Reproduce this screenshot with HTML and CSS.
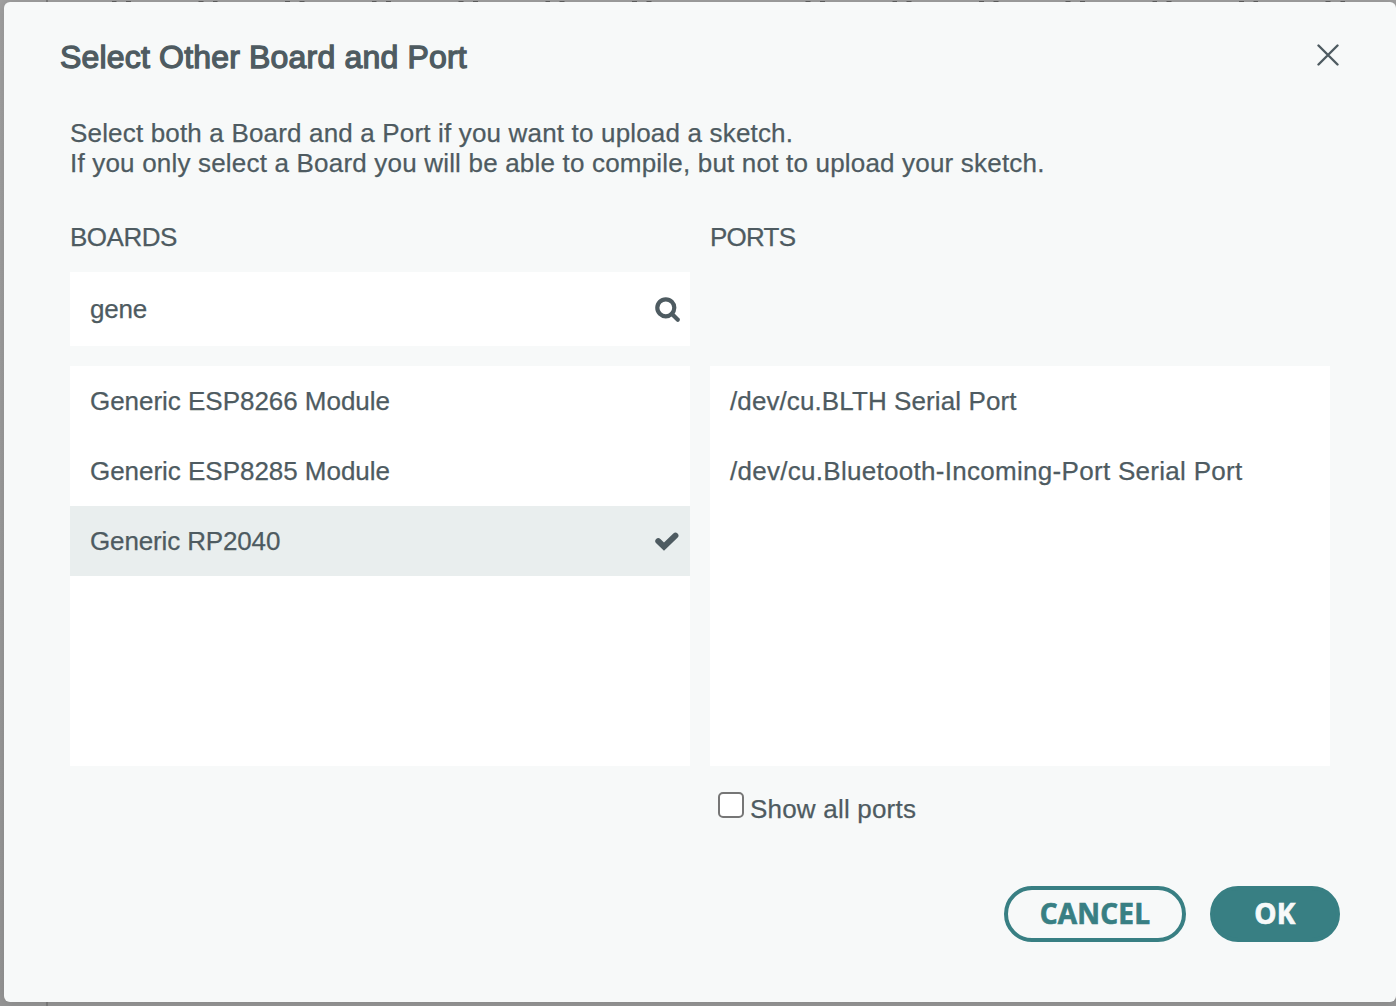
FILE: index.html
```html
<!DOCTYPE html>
<html lang="en">
<head>
<meta charset="utf-8">
<title>Select Other Board and Port</title>
<link rel="stylesheet" href="styles.css">
</head>
<body>
<svg class="backdrop" width="1396" height="1006" aria-hidden="true">
  <path class="gutter" d="M47 0v1006"/>
  <path class="ticks" d="M112 1.5h4.5M126 1.5h5M198.5 1.5h5M213 1.5h4.5M285 1.5h5M299.5 1.5h5M372 1.5h4.5M386 1.5h5M458.500 1.5h5M473 1.5h5M545.500 1.5h4.500M559.500 1.5h5M632 1.5h5M646.500 1.5h5M805.500 1.5h5M820 1.5h5M892.500 1.5h4.500M906.500 1.5h5M979 1.5h5M993.500 1.5h5M1065.500 1.5h5M1080 1.5h5M1152.500 1.5h4.500M1166.500 1.5h5M1239 1.5h5M1253.500 1.5h4.500M1325.500 1.5h5M1340.500 1.5h4.500"/>
</svg>
<main class="dialog">
  <header class="dialog-header">
    <h1>Select Other Board and Port</h1>
    <button class="close" aria-label="Close"><svg width="22" height="22" viewBox="0 0 22 22"><path d="M1.500 1.500 20.500 20.500M20.500 1.500 1.500 20.500"/></svg></button>
  </header>
  <p class="intro"><span class="t-first">Select both a Board and a Port if you want to upload a sketch.</span><br>If you only select a Board you will be able to compile, but not to upload your sketch.</p>
  <div class="columns">
    <section>
      <h2 class="t-boards">BOARDS</h2>
      <div class="search">
        <span class="t-gene">gene</span>
        <svg class="search-icon" width="26" height="26" viewBox="0 0 26 26"><circle cx="10.800" cy="10.800" r="8.500"/><path d="M17 17l5.800 5.800"/></svg>
      </div>
      <ul class="list">
        <li><span class="t-module">Generic ESP8266 Module</span></li>
        <li><span class="t-module">Generic ESP8285 Module</span></li>
        <li class="selected"><span class="t-rp">Generic RP2040</span><svg class="check" width="24" height="20" viewBox="0 0 24 20"><path d="M3.300 10.200 9 15.700 20.400 4.700"/></svg></li>
      </ul>
    </section>
    <section>
      <h2 class="t-ports">PORTS</h2>
      <div class="search-space"></div>
      <ul class="list">
        <li><span class="t-blth">/dev/cu.BLTH Serial Port</span></li>
        <li><span class="t-bluetooth">/dev/cu.Bluetooth-Incoming-Port Serial Port</span></li>
      </ul>
      <label class="show-all"><span class="box"></span><span class="t-show">Show all ports</span></label>
    </section>
  </div>
  <footer class="actions">
    <button class="btn cancel">CANCEL</button>
    <button class="btn ok">OK</button>
  </footer>
</main>
</body>
</html>
```
FILE: styles.css
```css
* { box-sizing: border-box; }
body {
  margin: 0;
  width: 1396px;
  height: 1006px;
  overflow: hidden;
  padding: 2px 0 4px 4px;
  background: linear-gradient(#a1a1a1, #959595);
  color: #4e5b61;
  font: 26px/30px "Liberation Sans", Arial, sans-serif;
  -webkit-text-stroke: .25px;
}
.backdrop { position: absolute; left: 0; top: 0; }
.gutter { stroke: #7c7c7c; stroke-width: 2; }
.ticks { stroke: #606060; stroke-width: 1; }
.dialog {
  position: relative;
  height: 1000px;
  padding: 35px 56px 0;
  border-radius: 6px;
  background: #f7f9f9;
  box-shadow: 0 0 12px rgba(0, 0, 0, .12);
}
.dialog-header { display: flex; justify-content: space-between; height: 79px; }
h1 { margin: 0; font-size: 32px; font-weight: 400; line-height: 40px; letter-spacing: .18px; -webkit-text-stroke: 1.3px; }
.close { width: 22px; height: 22px; margin: 7px 1px 0 0; padding: 0; border: 0; background: none; }
.close svg { display: block; fill: none; stroke: #4e5b61; stroke-width: 2.4; stroke-linecap: round; }
.intro { margin: 2px 0 0 10px; white-space: nowrap; letter-spacing: .19px; }
.t-first { letter-spacing: .17px; }
.columns { display: grid; grid-template-columns: 620px 620px; gap: 20px; margin: 44px 0 0 10px; }
h2 { margin: 0; font-size: 26px; font-weight: 400; line-height: 30px; height: 50px; }
.t-boards { letter-spacing: -.5px; }
.t-ports { letter-spacing: -.75px; }
.t-gene { letter-spacing: -.2px; }
.t-module { letter-spacing: -.03px; }
.t-rp { letter-spacing: -.14px; }
.t-blth { letter-spacing: .1px; }
.t-bluetooth { letter-spacing: .29px; }
.search { display: flex; align-items: center; justify-content: space-between; height: 74px; padding: 0 9px 0 20px; background: #fff; }
.search-space { height: 74px; }
.search-icon { margin-top: 2px; fill: none; stroke: #4e5b61; stroke-width: 4.2; stroke-linecap: round; }
.list { height: 400px; margin: 20px 0 0; padding: 0; list-style: none; background: #fff; }
.list li { display: flex; align-items: center; justify-content: space-between; height: 70px; padding: 0 11px 0 20px; white-space: nowrap; }
.list .selected { background: #e9eeee; }
.check { fill: none; stroke: #4e5b61; stroke-width: 6; stroke-linecap: round; }
.show-all { display: flex; gap: 6px; margin: 26px 0 0 8px; height: 34px; }
.box { width: 26px; height: 26px; border: 2px solid #767676; border-radius: 5px; background: #fff; }
.t-show { padding-top: 2px; letter-spacing: .2px; }
.actions { display: flex; justify-content: flex-end; gap: 24px; margin-top: 60px; }
.btn {
  height: 56px;
  padding: 0 0 2px;
  border: 4px solid #387f83;
  border-radius: 28px;
  background: none;
  color: #387f83;
  font: 700 28px/46px "Open Sans", sans-serif;
  letter-spacing: .2px;
  -webkit-text-stroke: .7px;
}
.cancel { width: 182px; }
.ok { width: 130px; background: #387f83; color: #f7f9f9; }
```
